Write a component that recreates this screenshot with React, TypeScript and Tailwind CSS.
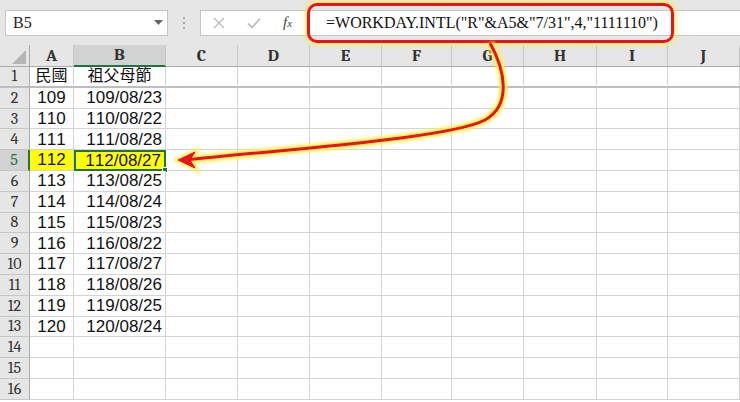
const cols = ["A", "B", "C", "D", "E", "F", "G", "H", "I", "J"];

const data: [string, string][] = [
  ["民國", "祖父母節"],
  ["109", "109/08/23"],
  ["110", "110/08/22"],
  ["111", "111/08/28"],
  ["112", "112/08/27"],
  ["113", "113/08/25"],
  ["114", "114/08/24"],
  ["115", "115/08/23"],
  ["116", "116/08/22"],
  ["117", "117/08/27"],
  ["118", "118/08/26"],
  ["119", "119/08/25"],
  ["120", "120/08/24"],
  ["", ""],
  ["", ""],
  ["", ""],
];

const TopBar = () => (
  <div className="flex items-center h-[45px] bg-[#e6e6e6] pl-[5px]">
    <div className="flex items-center justify-between w-[163px] h-[26px] bg-white border border-[#c6c6c6] pl-[7px] pr-[4px]">
      <span className="font-['Liberation_Serif',serif] text-[16px] text-[#222]">B5</span>
      <svg width="9" height="6" viewBox="0 0 9 6">
        <path d="M0 0 H9 L4.5 5 Z" fill="#666" />
      </svg>
    </div>
    <div className="w-[32px] flex flex-col items-center gap-[3px]">
      <span className="w-[2px] h-[2px] bg-[#a6a6a6]" />
      <span className="w-[2px] h-[2px] bg-[#a6a6a6]" />
      <span className="w-[2px] h-[2px] bg-[#a6a6a6]" />
    </div>
    <div className="flex-1 flex items-center h-[26px] bg-white border border-r-0 border-[#c6c6c6]">
      <div className="flex items-center w-[106px] pl-[12px] gap-[22px]">
        <svg width="12" height="12" viewBox="0 0 12 12">
          <path d="M1 1 L11 11 M11 1 L1 11" stroke="#bdbdbd" strokeWidth="1.4" />
        </svg>
        <svg width="14" height="12" viewBox="0 0 14 12">
          <path d="M1 6.5 L5 10.5 L13 1.5" stroke="#bdbdbd" strokeWidth="1.8" fill="none" />
        </svg>
        <span className="font-['Liberation_Serif',serif] italic text-[15px] text-[#444] leading-none">
          f<span className="text-[11px]">x</span>
        </span>
      </div>
      <span className="font-['Liberation_Serif',serif] text-[16px] text-[#111] pl-[19px] whitespace-nowrap">
        =WORKDAY.INTL("R"&amp;A5&amp;"7/31",4,"1111110")
      </span>
    </div>
  </div>
);

const Grid = () => (
  <div className="grid grid-cols-[30px_44px_92px_72px_72px_72px_70px_72px_73px_71px_72px] [font-kerning:none]">
    <div className="h-[22px] bg-[#e6e6e6] border-r border-b border-[#ababab] flex items-end justify-end pr-[3px] pb-[2px]">
      <svg width="14" height="14" viewBox="0 0 14 14">
        <path d="M14 0 V14 H0 Z" fill="#b5b5b5" />
      </svg>
    </div>
    {cols.map((c) => (
      <div
        key={c}
        className={`h-[22px] flex items-center justify-center border-r border-[#c6c6c6] ${
          c === "B"
            ? "bg-[#d2d2d2] border-b-2 border-b-[#217346]"
            : "bg-[#e6e6e6] border-b border-b-[#ababab]"
        }`}
      >
        <span className="font-serif font-bold text-[17px] text-[#333]">{c}</span>
      </div>
    ))}
    {data.map(([a, b], i) => {
      const r = i + 1;
      const sel = r === 5;
      const bottom = r === 1 ? "border-b-2 border-b-[#bdbdbd]" : "border-b border-b-[#d4d4d4]";
      return [
        <div
          key={`h${r}`}
          className={`h-[20.8px] flex items-center justify-center font-serif text-[16px] ${
            sel
              ? "bg-[#d2d2d2] text-[#217346] border-r-2 border-r-[#217346]"
              : "bg-[#e6e6e6] text-[#333] border-r border-r-[#ababab]"
          } ${r === 1 ? "border-b-2 border-b-[#bdbdbd]" : "border-b border-b-[#c6c6c6]"}`}
        >
          {r}
        </div>,
        <div
          key={`a${r}`}
          className={`h-[20.8px] flex items-center justify-center font-['Liberation_Sans','Noto_Sans_CJK_TC',sans-serif] ${
            r === 1 ? "text-[16px]" : "text-[17px]"
          } text-[#111] border-r border-r-[#d4d4d4] ${bottom} ${sel ? "bg-[#ffff00]" : "bg-white"}`}
        >
          {a}
        </div>,
        <div
          key={`b${r}`}
          className={`relative h-[20.8px] flex items-center ${
            r === 1 ? "justify-center text-[16px]" : "justify-end pr-[3px] text-[17px]"
          } font-['Liberation_Sans','Noto_Sans_CJK_TC',sans-serif] text-[#111] ${
            sel ? "bg-[#ffff00] border-2 border-[#217346]" : `bg-white border-r border-r-[#d4d4d4] ${bottom}`
          }`}
        >
          {b}
          {sel && (
            <span className="absolute -right-[4px] -bottom-[4px] w-[6px] h-[6px] bg-[#217346] border border-white" />
          )}
        </div>,
        ...cols.slice(2).map((c) => (
          <div key={`${c}${r}`} className={`h-[20.8px] bg-white border-r border-r-[#d4d4d4] ${bottom}`} />
        )),
      ];
    })}
  </div>
);

export default function App() {
  return (
    <div className="relative w-[740px] h-[402px] overflow-hidden bg-white">
      <TopBar />
      <Grid />
      <div className="absolute left-[307px] top-[3px] w-[367px] h-[40px] rounded-[10px] border-[3px] border-[#e8141b] shadow-[0_0_4px_2px_rgba(255,236,80,0.85)] pointer-events-none" />
      <svg className="absolute inset-0 pointer-events-none" width="740" height="402" viewBox="0 0 740 402">
        <defs>
          <filter id="glow" x="-10%" y="-10%" width="120%" height="120%">
            <feGaussianBlur stdDeviation="1.6" />
          </filter>
        </defs>
        <g filter="url(#glow)" opacity="0.9">
          <path d="M490 43 C505 70 512 105 485 120 C450 138 300 148 186 160" stroke="#fff04a" strokeWidth="8" fill="none" />
          <path d="M178 160 L195 152 L190 160 L195 168 Z" fill="#fff04a" stroke="#fff04a" strokeWidth="5" />
        </g>
        <path d="M490 43 C505 70 512 105 485 120 C450 138 300 148 186 160" stroke="#e8141b" strokeWidth="3" fill="none" />
        <path d="M178 160 L195 152 L190 160 L195 168 Z" fill="#e8141b" stroke="#e8141b" strokeWidth="1" strokeLinejoin="round" />
      </svg>
    </div>
  );
}
